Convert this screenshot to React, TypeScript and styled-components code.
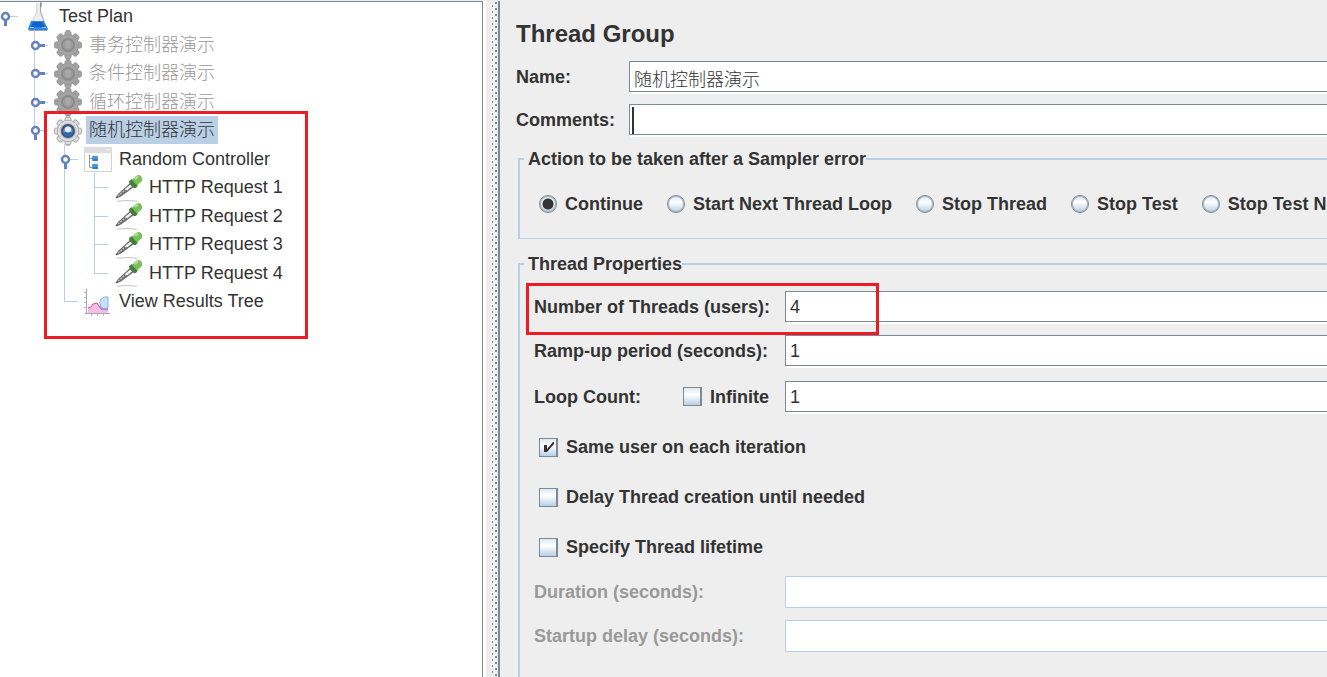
import React, { useId, useState } from "react";
import styled, { createGlobalStyle, css } from "styled-components";

const ink = "#333333";
const steel = "#7a8a99";
const sky = "#b8cfe5";
const panel = "#eeeeee";
const annotation = "#ed1c24";

const GlobalStyle = createGlobalStyle`
  *, *::before, *::after { box-sizing: border-box; }
  body {
    margin: 0;
    background: ${panel};
    color: ${ink};
    font: 18px/20px "Liberation Sans", "Noto Sans CJK SC", sans-serif;
    overflow: hidden;
  }
`;

const Window = styled.div`
  display: grid;
  grid-template-columns: 486px 14px minmax(0, 1fr);
  height: 100vh;
  padding-top: 1px;
  overflow: hidden;
`;

const TreePane = styled.nav`
  position: relative;
  margin-right: 3px;
  background: #fff;
  border-top: 1px solid ${steel};
  border-right: 1px solid ${steel};
  box-shadow: 3px 0 0 #fff;
`;

const TreeList = styled.ul`
  list-style: none;
  margin: 0;
  padding: 0;
`;

const TreeRow = styled.li`
  display: flex;
  align-items: stretch;
  height: 28px;
  &:nth-child(even) { height: 29px; }
`;

type GuideKind = "blank" | "line" | "tee" | "corner" | "root";

const Guide = styled.span<{ $kind: GuideKind; $last?: boolean }>`
  position: relative;
  flex: none;
  width: ${(p) => (p.$last ? 24 : 30)}px;
  &::before {
    content: "";
    position: absolute;
    left: 4px;
    top: 0;
    width: 1px;
    height: ${(p) => (p.$kind === "corner" ? "50%" : "100%")};
    background: ${(p) => (p.$kind === "blank" || p.$kind === "root" ? "transparent" : sky)};
  }
  &::after {
    content: "";
    position: absolute;
    left: 4px;
    top: 50%;
    width: 14px;
    height: 1px;
    background: ${(p) => (p.$kind === "blank" || p.$kind === "line" ? "transparent" : sky)};
  }
`;

const Handle = styled.svg`
  position: absolute;
  z-index: 1;
  left: 0;
  top: 50%;
  margin-top: -6px;
  width: 16px;
  height: 18px;
  overflow: visible;
`;

const NodeIcon = styled.svg`
  flex: none;
  width: 28px;
  height: 28px;
  margin-top: 1px;
  overflow: visible;
`;

const NodeLabel = styled.span<{ $selected?: boolean; $disabled?: boolean }>`
  display: flex;
  align-items: center;
  margin-left: 4px;
  padding: 0 3px;
  white-space: nowrap;
  color: ${(p) => (p.$disabled ? "#999999" : ink)};
  background: ${(p) => (p.$selected ? sky : "transparent")};
  font-weight: 300;
`;

const Highlight = styled.div<{ $area: "tree" | "threads" }>`
  position: absolute;
  z-index: 2;
  border: 3px solid ${annotation};
  pointer-events: none;
  ${(p) =>
    p.$area === "tree"
      ? css`left: 44px; top: 109px; width: 264px; height: 228px;`
      : css`left: 6px; top: 9px; width: 353px; height: 52px;`}
`;

const Divider = styled.div`
  border-right: 2px solid ${steel};
  background:
    linear-gradient(${steel} 2px, transparent 2px) 6px 4px / 1px 6px repeat-y,
    linear-gradient(${steel} 2px, transparent 2px) 9px 7px / 2px 6px repeat-y,
    linear-gradient(#fff 2px, transparent 2px) 5px 3px / 2px 6px repeat-y,
    linear-gradient(#fff 2px, transparent 2px) 8px 6px / 2px 6px repeat-y;
`;

const Editor = styled.main`
  padding: 20px 0 0 16px;
  overflow: hidden;
  font-weight: bold;
`;

const Title = styled.h1`
  margin: 0 0 14px;
  font-size: 24px;
  line-height: 26px;
`;

const Field = styled.div`
  display: grid;
  grid-template-columns: 113px minmax(0, 1fr);
  align-items: center;
  margin-bottom: 12px;
`;

const InputWrap = styled.div`
  position: relative;
`;

const TextInput = styled.input`
  display: block;
  width: 100%;
  height: 31px;
  padding: 2px 4px 0;
  border: 1px solid ${steel};
  border-right: 0;
  border-radius: 0;
  outline: none;
  background: #fff;
  box-shadow: 2px 2px 0 #fff;
  color: ${ink};
  font: inherit;
  font-weight: 300;
  &:disabled {
    height: 32px;
    border-color: ${sky};
    box-shadow: none;
  }
`;

const Caret = styled.span`
  position: absolute;
  left: 3px;
  top: 3px;
  width: 2px;
  height: 27px;
  background: ${ink};
`;

const Group = styled.fieldset<{ $tall?: boolean }>`
  position: relative;
  min-width: 0;
  margin: 14px 0 15px 2px;
  padding: 0;
  border: 2px solid ${sky};
  border-right: 0;
  border-bottom-width: 1px;
  min-height: ${(p) => (p.$tall ? "440px" : "0")};
`;

const Legend = styled.legend`
  margin-left: 4px;
  padding: 0 0 0 4px;
  line-height: 20px;
`;

const RadioRow = styled.div`
  display: flex;
  gap: 24px;
  padding: 25px 0 24px 19px;
  white-space: nowrap;
`;

const Choice = styled.label`
  display: flex;
  flex: none;
  align-items: center;
  gap: 8px;
`;

const Radio = styled.input`
  appearance: none;
  width: 18px;
  height: 18px;
  margin: 0;
  border: 1px solid ${steel};
  border-radius: 50%;
  background: linear-gradient(#dfe9f3, #ffffff 40%, #b8cfe5);
  box-shadow: inset 0 0 0 1px #a9b6c4;
  &:checked {
    background: radial-gradient(circle, ${ink} 5px, transparent 6px), linear-gradient(#dfe9f3, #ffffff 40%, #b8cfe5);
  }
`;

const TickWrap = styled.span`
  position: relative;
  display: flex;
`;

const Tick = styled.input`
  appearance: none;
  width: 19px;
  height: 19px;
  margin: 0;
  border: 1px solid ${steel};
  border-right-width: 2px;
  background: linear-gradient(#dfe9f3, #ffffff 40%, #b8cfe5);
`;

const TickMark = styled.svg`
  position: absolute;
  left: 4px;
  top: 3px;
  width: 12px;
  height: 12px;
  pointer-events: none;
`;

const Form = styled.div`
  padding: 17px 0 0 14px;
`;

const FormRow = styled.div<{ $gap: number; $dim?: boolean }>`
  display: grid;
  grid-template-columns: 251px minmax(0, 1fr);
  align-items: center;
  margin-bottom: ${(p) => p.$gap}px;
  color: ${(p) => (p.$dim ? "#999999" : ink)};
`;

const LabelPair = styled.div`
  display: grid;
  grid-template-columns: 149px auto;
`;

const TickList = styled.div`
  display: flex;
  flex-direction: column;
  gap: 30px;
  padding: 9px 0 19px 5px;
`;

type IconName = "flask" | "gearOff" | "gear" | "controller" | "dropper" | "chart";

function GearShape({ off }: { off?: boolean }) {
  const teeth = [0, 45, 90, 135, 180, 225, 270, 315];
  const body = off ? "#a3a3a3" : "#dedede";
  const edge = off ? "#979797" : "#a6a6a6";
  return (
    <>
      <path d="M12 -1h4v30h-4z" fill={off ? "#a3a3a3" : "#c4c4c4"} />
      <g fill={body} stroke={edge} strokeWidth="1">
        {teeth.map((a) => (
          <rect key={a} x="11" y="0.5" width="6" height="7" rx="1.5" transform={`rotate(${a} 14 14)`} />
        ))}
        <circle cx="14" cy="14" r="10.5" />
      </g>
      <circle cx="14" cy="14" r="10.2" fill={body} />
      {off ? (
        <>
          <circle cx="14" cy="14" r="6" fill="#9c9c9c" stroke="#8b8b8b" strokeWidth="2" />
          <path d="M11 11a4 4 0 0 1 6 0l-1 6h-4z" fill="#a8a8a8" />
        </>
      ) : (
        <>
          <circle cx="14" cy="14" r="8" fill="#bcbcbc" />
          <circle cx="14" cy="14" r="5.800" fill="#6f9fd8" stroke="#35537f" strokeWidth="2.200" />
          <path d="M9 17a6 6 0 0 0 10 0l-3-3h-4z" fill="#2f66ad" />
          <circle cx="14" cy="12.500" r="3" fill="#e3eefb" />
        </>
      )}
    </>
  );
}

function Icon({ name }: { name: IconName }) {
  return (
    <NodeIcon viewBox="0 0 28 28" aria-hidden="true">
      {name === "flask" && (
        <>
          <path d="M12 0h5v8l3 8 3 10H4l4-10 4-8z" fill="#eceef0" />
          <path d="M13 0v9l-4 9" stroke="#d3d7db" fill="none" />
          <path d="M16.500 0v9l3.500 9" stroke="#9fa4a9" fill="none" />
          <path d="M17 -1v5" stroke="#777777" fill="none" />
          <path d="M7 18h13l4 8q0 1-1 1H5q-1 0-1-1z" fill="#2f86e2" />
          <path d="M9 19h9l3 5H7z" fill="#0f62c8" />
          <path d="M6 24.500h4M18 24.500h4" stroke="#8fc2f5" />
          <path d="M5 27.500h18" stroke="#9aa3ac" />
        </>
      )}
      {name === "gearOff" && <GearShape off />}
      {name === "gear" && <GearShape />}
      {name === "controller" && (
        <>
          <rect x="0.5" y="2.5" width="27" height="24" fill="#fdfdfd" stroke="#d2d2d2" />
          <rect x="0" y="2" width="28" height="6" fill="#dcdcdc" />
          <path d="M22 4.500h4" stroke="#f7f7f7" />
          <path d="M5.500 10v12.500H9M5.500 13.500H9" stroke="#9a9a9a" fill="none" />
          <rect x="8" y="11" width="6" height="5" rx="1" fill="#4a97e0" />
          <rect x="8" y="19" width="6" height="5" rx="1" fill="#4a97e0" />
          <path d="M9 15h5M9 23h5" stroke="#1f63ad" />
        </>
      )}
      {name === "dropper" && (
        <>
          <path d="M1.500 23.500L4 20 16 9l4 4L7 22.500 2.500 24.500z" fill="#6b6b6b" />
          <path d="M4 22L16 12" stroke="#bdbdbd" strokeWidth="1.500" strokeDasharray="2 1" />
          <path d="M11 15l5.500-4.500 1.500 2-5 4z" fill="#f1f1f1" />
          <path d="M15 7l3-2 6 6-2 3-2 0-4.500-4.500z" fill="#417f3a" />
          <path d="M18 6l4-4q3-2 5 0t1 5l-5 4.500z" fill="#7abf5c" />
          <path d="M21 5l3-2.500" stroke="#b5e09c" strokeWidth="2" />
          <path d="M3 27.200l10-.7 10 .7" stroke="#c4c4c4" fill="none" />
        </>
      )}
      {name === "chart" && (
        <>
          <path d="M2.500 1v25M1 25.500h25" stroke="#a9a9a9" fill="none" />
          <path d="M0 4.500h2M0 9.500h2M0 14.500h2M0 19.500h2M7.500 26v2M13.500 26v2M19.500 26v2" stroke="#b9b9b9" />
          <path d="M4 25v-5l3-1 2-3 4-1 2 3 3 3 3-3 3-1v8z" fill="#f7bde2" />
          <path d="M4 20l3-1 2-3 4-1 2 3 3 4 3-2 3-1" stroke="#cf4f98" fill="none" />
          <path d="M24 9v11q-4 2-7-1-3-4 0-8 3-3 7-2z" fill="#c9e0fc" stroke="#86b2ea" />
          <path d="M16 18q3 4 8 2v2q-5 1-8-1z" fill="#a98fd6" />
        </>
      )}
    </NodeIcon>
  );
}

interface TreeNode {
  label: string;
  icon: IconName;
  guides: GuideKind[];
  handle?: "open" | "closed";
  disabled?: boolean;
  selected?: boolean;
}

const nodes: TreeNode[] = [
  { label: "Test Plan", icon: "flask", guides: ["root"], handle: "open" },
  { label: "事务控制器演示", icon: "gearOff", guides: ["blank", "tee"], handle: "closed", disabled: true },
  { label: "条件控制器演示", icon: "gearOff", guides: ["blank", "tee"], handle: "closed", disabled: true },
  { label: "循环控制器演示", icon: "gearOff", guides: ["blank", "tee"], handle: "closed", disabled: true },
  { label: "随机控制器演示", icon: "gear", guides: ["blank", "corner"], handle: "open", selected: true },
  { label: "Random Controller", icon: "controller", guides: ["blank", "blank", "tee"], handle: "open" },
  { label: "HTTP Request 1", icon: "dropper", guides: ["blank", "blank", "line", "tee"] },
  { label: "HTTP Request 2", icon: "dropper", guides: ["blank", "blank", "line", "tee"] },
  { label: "HTTP Request 3", icon: "dropper", guides: ["blank", "blank", "line", "tee"] },
  { label: "HTTP Request 4", icon: "dropper", guides: ["blank", "blank", "line", "corner"] },
  { label: "View Results Tree", icon: "chart", guides: ["blank", "blank", "corner"] },
];

function TreeItem({ node }: { node: TreeNode }) {
  return (
    <TreeRow>
      {node.guides.map((kind, i) => {
        const last = i === node.guides.length - 1;
        return (
          <Guide key={i} $kind={kind} $last={last}>
            {last && node.handle && (
              <Handle viewBox="0 0 16 18" aria-hidden="true">
                <path
                  d={node.handle === "open" ? "M5.500 8v8" : "M8 6.500h7"}
                  stroke="#6382bf"
                  strokeWidth="3"
                />
                <circle cx="5.500" cy="6.500" r="3.500" fill="#fff" stroke="#6382bf" strokeWidth="2.500" />
              </Handle>
            )}
          </Guide>
        );
      })}
      <Icon name={node.icon} />
      <NodeLabel $selected={node.selected} $disabled={node.disabled}>
        {node.label}
      </NodeLabel>
    </TreeRow>
  );
}

function CheckField({ label, initial = false }: { label: string; initial?: boolean }) {
  const [on, setOn] = useState(initial);
  return (
    <Choice>
      <TickWrap>
        <Tick type="checkbox" checked={on} onChange={(e) => setOn(e.target.checked)} />
        {on && (
          <TickMark viewBox="0 0 12 12" aria-hidden="true">
            <path d="M1 4h3v4l6-7h1v2L4 11H1z" fill={ink} />
          </TickMark>
        )}
      </TickWrap>
      {label}
    </Choice>
  );
}

interface ValueRowProps {
  label: string;
  value?: string;
  gap: number;
  disabled?: boolean;
}

function ValueRow({ label, value = "", gap, disabled }: ValueRowProps) {
  const id = useId();
  return (
    <FormRow $gap={gap} $dim={disabled}>
      <label htmlFor={id}>{label}</label>
      <TextInput id={id} defaultValue={value} disabled={disabled} />
    </FormRow>
  );
}

const errorActions = ["Continue", "Start Next Thread Loop", "Stop Thread", "Stop Test", "Stop Test Now"];

export default function App() {
  return (
    <>
      <GlobalStyle />
      <Window>
        <TreePane>
          <TreeList>
            {nodes.map((n) => (
              <TreeItem key={n.label} node={n} />
            ))}
          </TreeList>
          <Highlight $area="tree" />
        </TreePane>
        <Divider />
        <Editor>
          <Title>Thread Group</Title>
          <Field>
            <label htmlFor="name">Name:</label>
            <TextInput id="name" defaultValue="随机控制器演示" />
          </Field>
          <Field>
            <label htmlFor="comments">Comments:</label>
            <InputWrap>
              <TextInput id="comments" />
              <Caret />
            </InputWrap>
          </Field>
          <Group>
            <Legend>Action to be taken after a Sampler error</Legend>
            <RadioRow>
              {errorActions.map((a, i) => (
                <Choice key={a}>
                  <Radio type="radio" name="onError" defaultChecked={i === 0} />
                  {a}
                </Choice>
              ))}
            </RadioRow>
          </Group>
          <Group $tall>
            <Legend>Thread Properties</Legend>
            <Form>
              <ValueRow label="Number of Threads (users):" value="4" gap={13} />
              <ValueRow label="Ramp-up period (seconds):" value="1" gap={15} />
              <FormRow $gap={16}>
                <LabelPair>
                  <label htmlFor="loops">Loop Count:</label>
                  <CheckField label="Infinite" />
                </LabelPair>
                <TextInput id="loops" defaultValue="1" />
              </FormRow>
              <TickList>
                <CheckField label="Same user on each iteration" initial />
                <CheckField label="Delay Thread creation until needed" />
                <CheckField label="Specify Thread lifetime" />
              </TickList>
              <ValueRow label="Duration (seconds):" gap={12} disabled />
              <ValueRow label="Startup delay (seconds):" gap={12} disabled />
            </Form>
            <Highlight $area="threads" />
          </Group>
        </Editor>
      </Window>
    </>
  );
}
